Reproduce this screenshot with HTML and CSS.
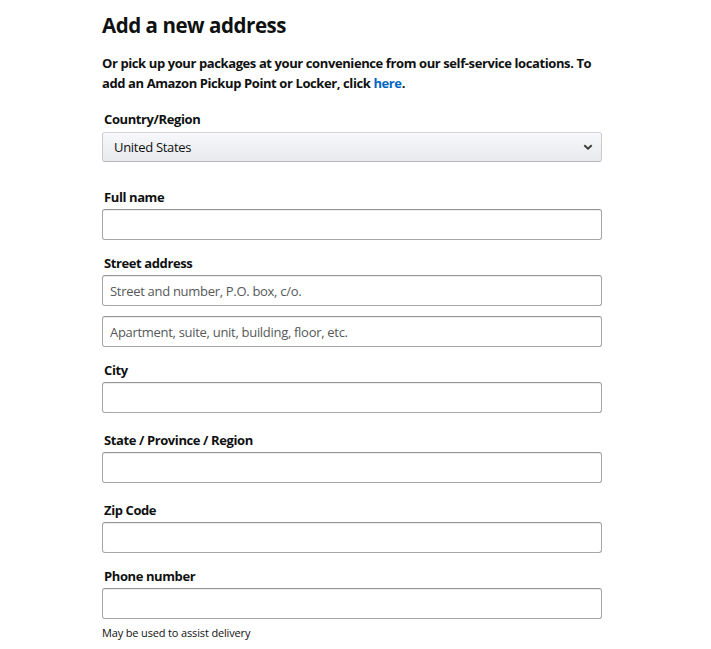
FILE: index.html
```html
<!DOCTYPE html>
<html lang="en">
<head>
<meta charset="utf-8">
<title>Add a new address</title>
<link rel="stylesheet" href="styles.css">
</head>
<body>
<main class="page">
  <h1 class="title">Add a new address</h1>
  <p class="intro">Or pick up your packages at your convenience from our self-service locations. To add an Amazon Pickup Point or Locker, click <a href="#" class="link">here</a>.</p>

  <div class="field field-country">
    <label class="label">Country/Region</label>
    <div class="select">
      <span class="select-value">United States</span>
      <svg class="chevron" width="10" height="6" viewBox="0 0 10 6"><path d="M1.3 1.2 L5 4.6 L8.7 1.2" fill="none" stroke="#3a3a3a" stroke-width="1.9"/></svg>
    </div>
  </div>

  <div class="field field-after-country">
    <label class="label">Full name</label>
    <input class="input" type="text">
  </div>

  <div class="field">
    <label class="label">Street address</label>
    <input class="input" type="text" placeholder="Street and number, P.O. box, c/o.">
    <input class="input input-second" type="text" placeholder="Apartment, suite, unit, building, floor, etc.">
  </div>

  <div class="field">
    <label class="label">City</label>
    <input class="input" type="text">
  </div>

  <div class="field field-loose">
    <label class="label">State / Province / Region</label>
    <input class="input" type="text">
  </div>

  <div class="field field-loose">
    <label class="label">Zip Code</label>
    <input class="input" type="text">
  </div>

  <div class="field">
    <label class="label">Phone number</label>
    <input class="input" type="text">
    <div class="hint">May be used to assist delivery</div>
  </div>
</main>
</body>
</html>
```
FILE: styles.css
```css
* { box-sizing: border-box; }
html, body { margin: 0; padding: 0; background: #fff; }
body {
  font-family: "Open Sans", "Noto Sans", "Liberation Sans", sans-serif;
  color: #0f1111;
}
.page {
  width: 500px;
  margin-left: 102px;
  padding-top: 10px;
}
.title {
  margin: 0;
  font-size: 20.5px;
  line-height: 30px;
  font-weight: 700;
  letter-spacing: -0.45px;
}
.intro {
  margin: 13px 0 0;
  font-size: 13px;
  line-height: 20px;
  font-weight: 700;
  letter-spacing: -0.4px;
}
.link { color: #0066c0; text-decoration: none; }
.field { margin-top: 13px; }
.field-country { margin-top: 17px; }
.field-after-country { margin-top: 25px; }
.field-loose { margin-top: 17px; }
.label {
  display: block;
  padding: 1px 0 0 2px;
  font-size: 13px;
  line-height: 19px;
  font-weight: 700;
  letter-spacing: -0.4px;
  margin-bottom: 2px;
}
.field-country .label { padding-top: 0; margin-bottom: 3px; }
.select {
  height: 30px;
  border: 1px solid #c9cbcf;
  border-top-color: #d2d4d7;
  border-bottom-color: #b7b9bd;
  border-radius: 3px;
  background: linear-gradient(#f7f8fa, #e7e9ec);
  box-shadow: 0 1px 0 rgba(255,255,255,.6) inset;
  display: flex;
  align-items: center;
  justify-content: space-between;
  padding: 0 8px 0 11px;
  font-size: 13px;
  letter-spacing: -0.3px;
  color: #0f1111;
}
.chevron { display: block; }
.input {
  display: block;
  width: 100%;
  height: 31px;
  border: 1px solid #a6a6a6;
  border-top-color: #949494;
  border-radius: 3px;
  box-shadow: 0 1px 0 rgba(255,255,255,.5), 0 1px 0 rgba(0,0,0,.07) inset;
  padding: 0 7px;
  font-family: inherit;
  font-size: 13px;
  letter-spacing: -0.3px;
  color: #0f1111;
  background: #fff;
  outline: none;
}
.input::placeholder { color: #565959; opacity: 1; }
.input-second { margin-top: 10px; }
.hint {
  margin-top: 6px;
  font-size: 11px;
  line-height: 16px;
  letter-spacing: -0.15px;
  color: #0f1111;
}
```
